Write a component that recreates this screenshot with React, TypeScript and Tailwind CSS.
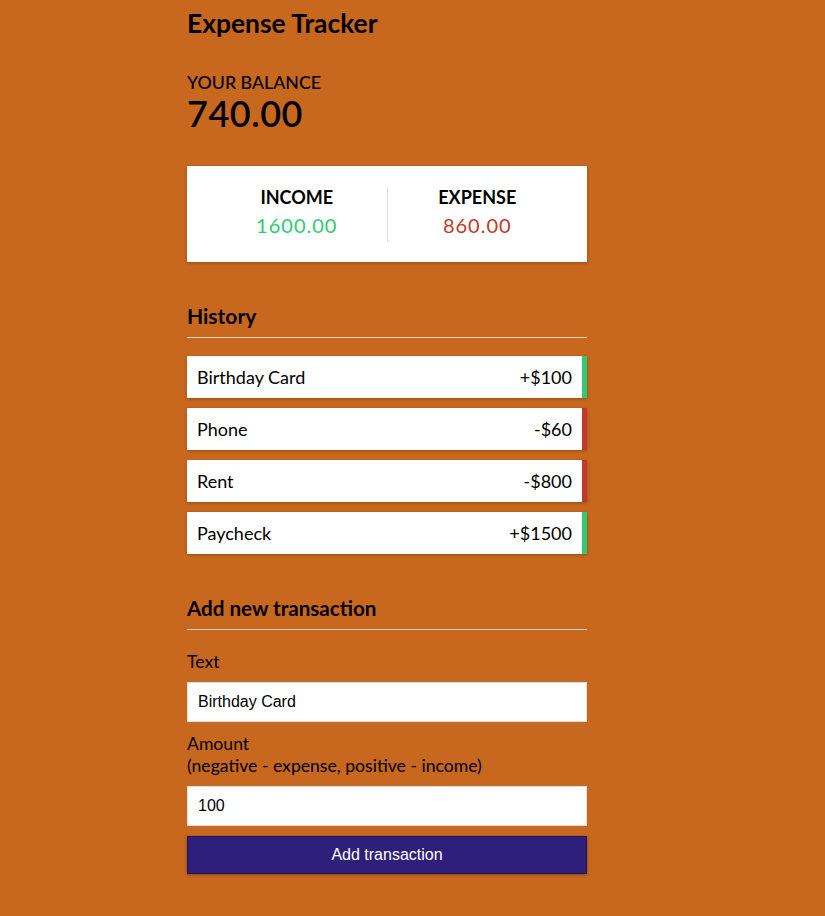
type Transaction = {
  id: number;
  text: string;
  amount: number;
};

const transactions: Transaction[] = [
  { id: 1, text: "Birthday Card", amount: 100 },
  { id: 2, text: "Phone", amount: -60 },
  { id: 3, text: "Rent", amount: -800 },
  { id: 4, text: "Paycheck", amount: 1500 },
];

export default function App() {
  const amounts = transactions.map((t) => t.amount);
  const total = amounts.reduce((a, b) => a + b, 0).toFixed(2);
  const income = amounts.filter((a) => a > 0).reduce((a, b) => a + b, 0).toFixed(2);
  const expense = (amounts.filter((a) => a < 0).reduce((a, b) => a + b, 0) * -1).toFixed(2);

  return (
    <div className="min-h-[916px] bg-[#c8671e] font-['Lato','Liberation_Sans',sans-serif] text-black">
      <div className="ml-[187px] w-[400px] pt-[6px] pb-[40px]">
        <h2 className="text-[26.4px] font-bold leading-[34px]">Expense Tracker</h2>

        <div className="mt-[31px]">
          <h4 className="text-[17.8px] font-medium uppercase leading-[22px]">Your Balance</h4>
          <h1 className="text-[36px] font-semibold leading-[40px] tracking-[0.5px]">{total}</h1>
        </div>

        <div className="mt-[33px] flex h-[96px] items-center bg-white px-[20px] shadow-[0_1px_3px_rgba(0,0,0,0.25)]">
          <div className="flex flex-1 flex-col items-center border-r border-[#dedede] pb-[4px]">
            <h4 className="text-[18px] font-bold uppercase leading-[20px]">Income</h4>
            <p className="mt-[5px] text-[20px] leading-[26px] tracking-[1px] text-[#2ecc71]">{income}</p>
          </div>
          <div className="flex flex-1 flex-col items-center pb-[4px]">
            <h4 className="text-[18px] font-bold uppercase leading-[20px]">Expense</h4>
            <p className="mt-[5px] text-[20px] leading-[26px] tracking-[1px] text-[#c0392b]">{expense}</p>
          </div>
        </div>

        <h3 className="mt-[42px] border-b border-[#ebd5c5] pb-[9px] text-[21px] font-bold leading-[24px]">
          History
        </h3>
        <ul className="mt-[18px] flex flex-col gap-[10px]">
          {transactions.map((t) => (
            <li
              key={t.id}
              className={`flex h-[42px] items-center justify-between border-r-[5px] bg-white pl-[10px] pr-[10px] text-[18px] shadow-[0_1px_3px_rgba(0,0,0,0.25)] ${
                t.amount < 0 ? "border-[#c0392b]" : "border-[#2ecc71]"
              }`}
            >
              <span>{t.text}</span>
              <span>
                {t.amount < 0 ? "-" : "+"}${Math.abs(t.amount)}
              </span>
            </li>
          ))}
        </ul>

        <h3 className="mt-[42px] border-b border-[#ebd5c5] pb-[9px] text-[20.6px] font-bold leading-[24px]">
          Add new transaction
        </h3>
        <form className="mt-[21px]">
          <div className="mb-[11px]">
            <label className="block text-[17.6px] leading-[22px]">Text</label>
            <input
              type="text"
              defaultValue="Birthday Card"
              className="mt-[9px] block h-[40px] w-full border border-[#dedede] bg-white px-[10px] font-['Liberation_Sans',Arial,sans-serif] text-[16px] text-black outline-none"
            />
          </div>
          <div className="mb-[10px]">
            <label className="block text-[17.6px] leading-[22px]">
              Amount <br />
              (negative - expense, positive - income)
            </label>
            <input
              type="number"
              defaultValue="100"
              className="mt-[9px] block h-[40px] w-full border border-[#dedede] bg-white px-[10px] font-['Liberation_Sans',Arial,sans-serif] text-[16px] text-black outline-none"
            />
          </div>
          <button
            type="button"
            className="block h-[38px] w-full border border-[#1b1160] bg-[#2d1f7a] font-['Liberation_Sans',Arial,sans-serif] text-[16px] text-white shadow-[0_1px_3px_rgba(0,0,0,0.3)]"
          >
            Add transaction
          </button>
        </form>
      </div>
    </div>
  );
}
